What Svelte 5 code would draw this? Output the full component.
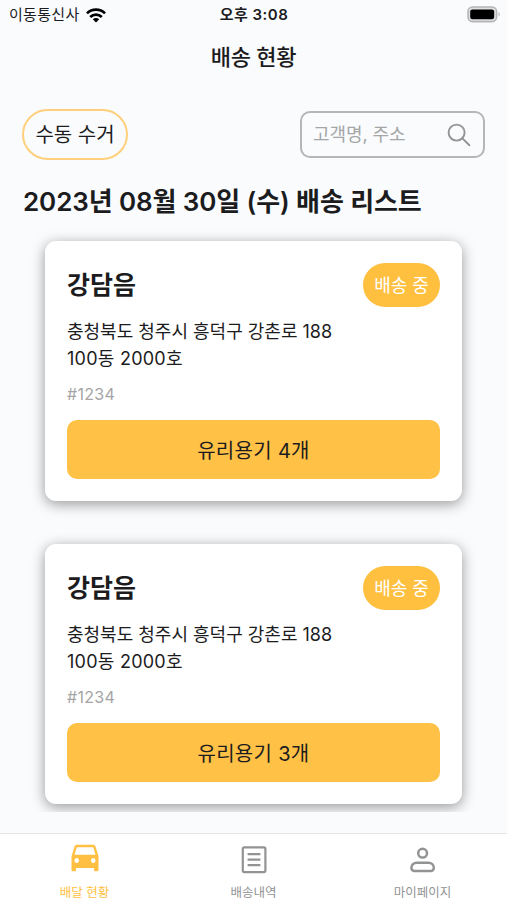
<script lang="ts">
  type Delivery = {
    id: number;
    name: string;
    address: string;
    detail: string;
    code: string;
    status: string;
    count: number;
  };

  const deliveries: Delivery[] = [
    {
      id: 1,
      name: '강담음',
      address: '충청북도 청주시 흥덕구 강촌로 188',
      detail: '100동 2000호',
      code: '#1234',
      status: '배송 중',
      count: 4
    },
    {
      id: 2,
      name: '강담음',
      address: '충청북도 청주시 흥덕구 강촌로 188',
      detail: '100동 2000호',
      code: '#1234',
      status: '배송 중',
      count: 3
    }
  ];

  const tabs = [
    { id: 'status', label: '배달 현황' },
    { id: 'history', label: '배송내역' },
    { id: 'mypage', label: '마이페이지' }
  ];

  let active = $state('status');
  let query = $state('');
</script>

<div class="screen">
  <div class="status-bar">
    <div class="carrier">
      <span>이동통신사</span>
      <svg width="20" height="15" viewBox="0 0 20 15" fill="none" stroke="#000" stroke-width="2.7">
        <path d="M1 5.4a12.8 12.8 0 0 1 18 0" />
        <path d="M4.2 9a8.2 8.2 0 0 1 11.6 0" />
        <path d="M10 14.6l-3.2-3.3a4.6 4.6 0 0 1 6.4 0z" fill="#000" stroke="none" />
      </svg>
    </div>
    <span class="time">오후 3:08</span>
    <svg class="battery" width="34" height="18" viewBox="0 0 34 18">
      <rect x="1" y="1" width="28.600" height="14.6" rx="4.5" fill="#e0e1e2" stroke="#b4b5b6" stroke-width="1.6" />
      <rect x="3.2" y="3.4" width="24" height="9.800" rx="2.2" fill="#000" />
      <path d="M31.6 6.1c1.7.8 1.7 3.6 0 4.4z" fill="#b4b5b6" />
    </svg>
  </div>

  <h1>배송 현황</h1>

  <div class="toolbar">
    <button class="pickup">수동 수거</button>
    <label class="search">
      <input bind:value={query} placeholder="고객명, 주소" />
      <svg width="24" height="24" viewBox="0 0 24 24" fill="none" stroke="#929394" stroke-width="1.9" stroke-linecap="round">
        <circle cx="9.6" cy="9.6" r="8" />
        <path d="M15.4 15.4l7 6.8" />
      </svg>
    </label>
  </div>

  <h2>2023년 08월 30일 (수) 배송 리스트</h2>

  <div class="list">
    {#each deliveries as item (item.id)}
      <article class="card">
        <div class="card-head">
          <h3>{item.name}</h3>
          <span class="badge">{item.status}</span>
        </div>
        <p class="address">{item.address}<br /><span class="detail">{item.detail}</span></p>
        <p class="code">{item.code}</p>
        <button class="count">유리용기 {item.count}개</button>
      </article>
    {/each}
  </div>

  <nav>
    {#each tabs as tab (tab.id)}
      <button class="tab" class:active={active === tab.id} onclick={() => (active = tab.id)}>
        {#if tab.id === 'status'}
          <svg width="36" height="40" viewBox="0 0 24 24" preserveAspectRatio="none" fill="currentColor">
            <path d="M18.92 5.01C18.72 4.42 18.16 4 17.5 4h-11c-.66 0-1.21.42-1.42 1.01L3 11v8c0 .55.45 1 1 1h1c.55 0 1-.45 1-1v-1h12v1c0 .55.45 1 1 1h1c.55 0 1-.45 1-1v-8l-2.08-5.99zM6.5 15c-.83 0-1.5-.67-1.5-1.5S5.67 12 6.5 12s1.5.67 1.5 1.5S7.33 15 6.5 15zm11 0c-.83 0-1.5-.67-1.5-1.5s.67-1.5 1.5-1.5 1.5.67 1.5 1.5-.67 1.5-1.5 1.5zM5 10l1.5-4.5h11L19 10H5z" />
          </svg>
        {:else if tab.id === 'history'}
          <svg width="36" height="40" viewBox="0 0 36 40" fill="none" stroke="currentColor" stroke-width="2.2">
            <rect x="6.8" y="9.3" width="22.600" height="24.8" rx="1.5" />
            <path d="M11.6 16.2h12.8M11.6 21.700h12.8M11.6 27.200h12.8" />
          </svg>
        {:else}
          <svg width="36" height="40" viewBox="0 0 36 40" fill="none" stroke="currentColor" stroke-width="2.5">
            <circle cx="17.6" cy="15.2" r="4.4" />
            <path d="M11.7 24.700h11.8a5.300 5 0 0 1 5.300 5v.3a3 3 0 0 1-3 3H9.400a3 3 0 0 1-3-3v-.3a5.300 5 0 0 1 5.300-5z" />
          </svg>
        {/if}
        <span>{tab.label}</span>
      </button>
    {/each}
  </nav>
</div>

<style>
  :global(body) {
    margin: 0;
  }

  .screen {
    display: flex;
    flex-direction: column;
    box-sizing: border-box;
    width: 507px;
    height: 900px;
    overflow: hidden;
    background: #f9fbfd;
    color: #1c1c1e;
    font-family: Inter, 'Noto Sans CJK KR', sans-serif;
  }

  h1, h2, h3, p {
    margin: 0;
  }

  button {
    padding: 0;
    border: none;
    background: none;
    color: inherit;
    font-family: inherit;
    cursor: pointer;
  }

  .status-bar {
    display: grid;
    grid-template-columns: 1fr auto 1fr;
    align-items: center;
    height: 30px;
    padding: 0 6px 0 9px;
    font-size: 15px;
    line-height: 30px;
  }

  .carrier {
    display: flex;
    align-items: center;
    gap: 6px;
    letter-spacing: 0.3px;
  }

  .time {
    padding-right: 2px;
    font-weight: 600;
    letter-spacing: 0.5px;
  }

  .battery {
    justify-self: end;
  }

  h1 {
    height: 54px;
    font-size: 22px;
    font-weight: 500;
    line-height: 54px;
    letter-spacing: -0.3px;
    text-align: center;
  }

  .toolbar {
    display: flex;
    align-items: center;
    justify-content: space-between;
    height: 51px;
    margin-top: 25px;
    padding: 0 22px;
  }

  .pickup {
    box-sizing: border-box;
    width: 106px;
    height: 51px;
    border: 2px solid #ffd07c;
    border-radius: 26px;
    font-size: 20px;
    line-height: 46px;
  }

  .search {
    display: flex;
    align-items: center;
    justify-content: space-between;
    box-sizing: border-box;
    width: 185px;
    height: 47px;
    padding: 0 12px 0 11px;
    border: 2px solid #b5b6b7;
    border-radius: 10px;
  }

  .search input {
    width: 110px;
    padding: 0;
    border: none;
    outline: none;
    background: none;
    font-family: inherit;
    font-size: 18px;
    letter-spacing: -0.1px;
  }

  .search input::placeholder {
    color: #a5a6a7;
  }

  h2 {
    height: 38px;
    margin-top: 22px;
    padding-left: 23px;
    font-size: 26px;
    font-weight: 600;
    line-height: 39px;
    letter-spacing: -0.1px;
    white-space: nowrap;
  }

  .list {
    display: flex;
    flex-direction: column;
    gap: 43px;
    height: 592px;
    box-sizing: border-box;
    padding: 21px 45px 0;
    overflow: hidden;
  }

  .card {
    flex-shrink: 0;
    box-sizing: border-box;
    height: 260px;
    padding: 22px 22px 0;
    border-radius: 11px;
    background: #fff;
    box-shadow: 0 3px 14px rgba(0, 0, 0, 0.4);
  }

  .card-head {
    display: flex;
    align-items: center;
    justify-content: space-between;
    height: 44px;
  }

  h3 {
    font-size: 25px;
    font-weight: 600;
    line-height: 46px;
  }

  .badge {
    width: 77px;
    height: 44px;
    border-radius: 22px;
    background: #ffbf3f;
    color: #fff;
    font-size: 18px;
    line-height: 45px;
    text-align: center;
  }

  .address {
    margin-top: 11px;
    font-size: 18px;
    line-height: 27px;
    white-space: nowrap;
  }

  .detail {
    letter-spacing: 0.25px;
  }

  .code {
    margin-top: 10px;
    color: #a5a5a5;
    font-size: 16px;
    line-height: 24px;
    letter-spacing: 0.3px;
  }

  .count {
    display: block;
    width: 100%;
    height: 59px;
    margin-top: 14px;
    border-radius: 10px;
    background: #ffc146;
    font-size: 20px;
    letter-spacing: 0.3px;
  }

  nav {
    display: grid;
    grid-template-columns: repeat(3, 1fr);
    box-sizing: border-box;
    height: 67px;
    margin-top: 21px;
    border-top: 1px solid #e3e5e6;
    background: #fff;
  }

  .tab {
    display: flex;
    flex-direction: column;
    align-items: center;
    padding-top: 4px;
    color: #929394;
    font-size: 12.5px;
  }

  .tab span {
    margin-top: 5px;
    line-height: 20px;
  }

  .tab.active {
    color: #ffbf42;
  }
</style>
